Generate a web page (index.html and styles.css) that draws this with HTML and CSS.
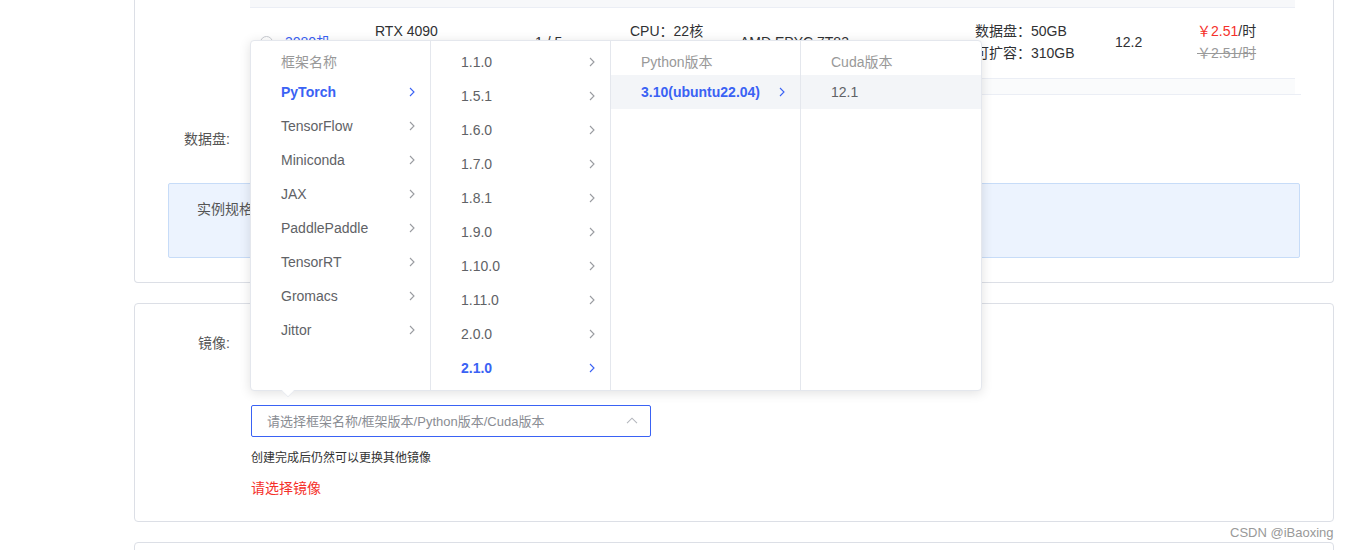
FILE: index.html
```html
<!DOCTYPE html>
<html lang="zh-CN">
<head>
<meta charset="utf-8">
<title>创建实例</title>
<link rel="stylesheet" href="styles.css">
</head>
<body>
<div class="page">
  <section class="card card-spec">
    <div class="table-wrap">
      <div class="table">
        <div class="thead"></div>
        <div class="trow">
          <div class="cell c-name"><span class="radio"></span><span class="link">3080机</span></div>
          <div class="cell c-gpu"><div>RTX 4090</div><div>24GB</div></div>
          <div class="cell c-count">1 / 5</div>
          <div class="cell c-cpu"><div>CPU：22核</div><div>内存：90GB</div></div>
          <div class="cell c-model">AMD EPYC 7T83</div>
          <div class="cell c-disk"><div>数据盘：50GB</div><div>可扩容：310GB</div></div>
          <div class="cell c-cuda">12.2</div>
          <div class="cell c-price"><div><span class="red">￥2.51</span>/时</div><div class="strike">￥2.51/时</div></div>
        </div>
        <div class="tband"></div>
      </div>
    </div>
    <div class="form-row disk-row">
      <div class="form-label">数据盘:</div>
      <div class="form-content"><span class="disk-value">50GB</span></div>
    </div>
    <div class="notice">实例规格：GPU RTX 4090</div>
  </section>

  <section class="card card-image">
    <div class="form-row">
      <div class="form-label">镜像:</div>
      <div class="form-content">
        <div class="tabs"><span class="tab tab-on">基础镜像</span><span class="tab">社区镜像</span></div>
        <div class="select">
          <span class="placeholder">请选择框架名称/框架版本/Python版本/Cuda版本</span>
          <svg class="select-arrow" width="12" height="7" viewBox="0 0 12 7"><path d="M1 6.2 L6 1.2 L11 6.2" fill="none" stroke="#b4b7bd" stroke-width="1.1"/></svg>
        </div>
        <div class="hint">创建完成后仍然可以更换其他镜像</div>
        <div class="error">请选择镜像</div>
      </div>
    </div>
  </section>

  <section class="card card-next"></section>
</div>

<div class="cascader">
  <ul class="panel p1">
    <li class="item head">框架名称</li>
    <li class="item active">PyTorch<svg class="chev" viewBox="0 0 6 10"><path d="M1 1 L5 5 L1 9"/></svg></li>
    <li class="item">TensorFlow<svg class="chev" viewBox="0 0 6 10"><path d="M1 1 L5 5 L1 9"/></svg></li>
    <li class="item">Miniconda<svg class="chev" viewBox="0 0 6 10"><path d="M1 1 L5 5 L1 9"/></svg></li>
    <li class="item">JAX<svg class="chev" viewBox="0 0 6 10"><path d="M1 1 L5 5 L1 9"/></svg></li>
    <li class="item">PaddlePaddle<svg class="chev" viewBox="0 0 6 10"><path d="M1 1 L5 5 L1 9"/></svg></li>
    <li class="item">TensorRT<svg class="chev" viewBox="0 0 6 10"><path d="M1 1 L5 5 L1 9"/></svg></li>
    <li class="item">Gromacs<svg class="chev" viewBox="0 0 6 10"><path d="M1 1 L5 5 L1 9"/></svg></li>
    <li class="item">Jittor<svg class="chev" viewBox="0 0 6 10"><path d="M1 1 L5 5 L1 9"/></svg></li>
  </ul>
  <ul class="panel p2">
    <li class="item">1.1.0<svg class="chev" viewBox="0 0 6 10"><path d="M1 1 L5 5 L1 9"/></svg></li>
    <li class="item">1.5.1<svg class="chev" viewBox="0 0 6 10"><path d="M1 1 L5 5 L1 9"/></svg></li>
    <li class="item">1.6.0<svg class="chev" viewBox="0 0 6 10"><path d="M1 1 L5 5 L1 9"/></svg></li>
    <li class="item">1.7.0<svg class="chev" viewBox="0 0 6 10"><path d="M1 1 L5 5 L1 9"/></svg></li>
    <li class="item">1.8.1<svg class="chev" viewBox="0 0 6 10"><path d="M1 1 L5 5 L1 9"/></svg></li>
    <li class="item">1.9.0<svg class="chev" viewBox="0 0 6 10"><path d="M1 1 L5 5 L1 9"/></svg></li>
    <li class="item">1.10.0<svg class="chev" viewBox="0 0 6 10"><path d="M1 1 L5 5 L1 9"/></svg></li>
    <li class="item">1.11.0<svg class="chev" viewBox="0 0 6 10"><path d="M1 1 L5 5 L1 9"/></svg></li>
    <li class="item">2.0.0<svg class="chev" viewBox="0 0 6 10"><path d="M1 1 L5 5 L1 9"/></svg></li>
    <li class="item active">2.1.0<svg class="chev" viewBox="0 0 6 10"><path d="M1 1 L5 5 L1 9"/></svg></li>
  </ul>
  <ul class="panel p3">
    <li class="item head">Python版本</li>
    <li class="item active hover">3.10(ubuntu22.04)<svg class="chev" viewBox="0 0 6 10"><path d="M1 1 L5 5 L1 9"/></svg></li>
  </ul>
  <ul class="panel p4">
    <li class="item head">Cuda版本</li>
    <li class="item hover">12.1</li>
  </ul>
  <div class="popper-arrow"></div>
</div>

<div class="watermark">CSDN @iBaoxing</div>
</body>
</html>
```

FILE: styles.css
```css
* { box-sizing: border-box; }

html, body {
  margin: 0;
  padding: 0;
  background: #ffffff;
  height: 550px;
  overflow: hidden;
}

body {
  font-family: "Liberation Sans", "Noto Sans CJK SC", sans-serif;
  font-size: 14px;
  color: #333333;
  position: relative;
}

.page {
  padding-left: 134px;
  width: 1334px;
}

.card {
  border: 1px solid #dcdfe6;
  border-radius: 4px;
  background: #fff;
  width: 1200px;
}

/* ---------- spec card ---------- */
.card-spec {
  border-top: 0;
  border-top-left-radius: 0;
  border-top-right-radius: 0;
  padding-bottom: 24px;
}

.table-wrap {
  margin-left: 115px;
  width: 1051px;
  border-bottom: 1px solid #ebeef5;
}

.table {
  width: 1045px;
}

.thead {
  height: 8px;
  background: #f7f8fa;
  border-bottom: 1px solid #ebeef5;
}

.trow {
  display: grid;
  grid-template-columns: 115px 160px 95px 110px 235px 140px 82px 108px;
  height: 71px;
  align-items: center;
  border-bottom: 1px solid #ebeef5;
  line-height: 22px;
  padding-bottom: 2px;
  color: #303133;
}

.cell {
  padding-left: 10px;
  white-space: nowrap;
}

.c-name {
  display: flex;
  align-items: center;
  gap: 12px;
}

.radio {
  width: 13px;
  height: 13px;
  border: 1px solid #c8cbd1;
  border-radius: 50%;
  display: inline-block;
}

.link { color: #3a62f4; }

.red { color: #f5302a; }
.strike { color: #999; text-decoration: line-through; }

.tband {
  height: 15px;
  background: #fafbfc;
}

.form-row {
  display: flex;
  align-items: flex-start;
}

.form-label {
  width: 116px;
  padding-right: 21px;
  text-align: right;
  line-height: 34px;
  color: #555;
  flex: none;
}

.disk-row {
  margin-top: 27px;
}

.disk-value { line-height: 34px; color: #555; }

.notice {
  margin: 27px 33px 0 33px;
  height: 75px;
  background: #ecf3fe;
  border: 1px solid #c7dcf8;
  border-radius: 2px;
  padding: 15px 28px;
  color: #555;
  line-height: 20px;
}

/* ---------- image card ---------- */
.card-image {
  margin-top: 20px;
  padding: 22px 0 23px;
}

.tabs {
  height: 34px;
  display: flex;
  align-items: center;
  gap: 12px;
}

.tab {
  border: 1px solid #dcdfe6;
  padding: 4px 12px;
  border-radius: 3px;
  font-size: 13px;
}

.tab-on { border-color: #3a62f4; color: #3a62f4; }

.select {
  margin-top: 45px;
  width: 400px;
  height: 32px;
  border: 1px solid #3a62f4;
  border-radius: 2px;
  display: flex;
  align-items: center;
  justify-content: space-between;
  padding: 0 12px 2px 15px;
}

.placeholder {
  color: #8a8d93;
  font-size: 13px;
}

.select-arrow { display: block; margin-top: 1px; }

.hint {
  margin-top: 11px;
  font-size: 12px;
  line-height: 20px;
  color: #333;
}

.error {
  margin-top: 10px;
  font-size: 14px;
  line-height: 20px;
  color: #f5302a;
}

.card-next {
  margin-top: 20px;
  height: 40px;
}

/* ---------- cascader dropdown ---------- */
.cascader {
  position: absolute;
  left: 250px;
  top: 40px;
  width: 732px;
  height: 351px;
  background: #fff;
  border: 1px solid #e4e7ed;
  border-radius: 4px;
  box-shadow: 0 2px 12px rgba(0, 0, 0, 0.12);
  display: flex;
  z-index: 10;
}

.panel {
  list-style: none;
  margin: 0;
  padding: 4px 0;
  height: 100%;
  border-right: 1px solid #e4e7ed;
  flex: none;
}

.p1 { width: 180px; }
.p2 { width: 180px; }
.p3 { width: 190px; }
.p4 { width: 180px; border-right: 0; }

.item {
  height: 34px;
  line-height: 34px;
  padding: 0 15px 0 30px;
  display: flex;
  align-items: center;
  justify-content: space-between;
  color: #606266;
  font-size: 14px;
  white-space: nowrap;
}

.item.head {
  color: #999;
  height: 30px;
  padding-top: 4px;
}

.item.active {
  color: #3a62f4;
  font-weight: bold;
}

.item.hover { background: #f3f5f8; }

.chev {
  width: 6px;
  height: 10px;
  flex: none;
}

.chev path {
  fill: none;
  stroke: #9a9ca1;
  stroke-width: 1.1;
}

.item.active .chev path { stroke: #3a62f4; }

.popper-arrow {
  position: absolute;
  left: 31px;
  bottom: -7px;
  width: 12px;
  height: 12px;
  background: #fff;
  border-right: 1px solid #e4e7ed;
  border-bottom: 1px solid #e4e7ed;
  transform: rotate(45deg) scale(0.75);
}

.watermark {
  position: absolute;
  left: 1228px;
  top: 525px;
  font-size: 13px;
  color: #999;
  background: #fff;
  padding: 0 2px;
}
```
